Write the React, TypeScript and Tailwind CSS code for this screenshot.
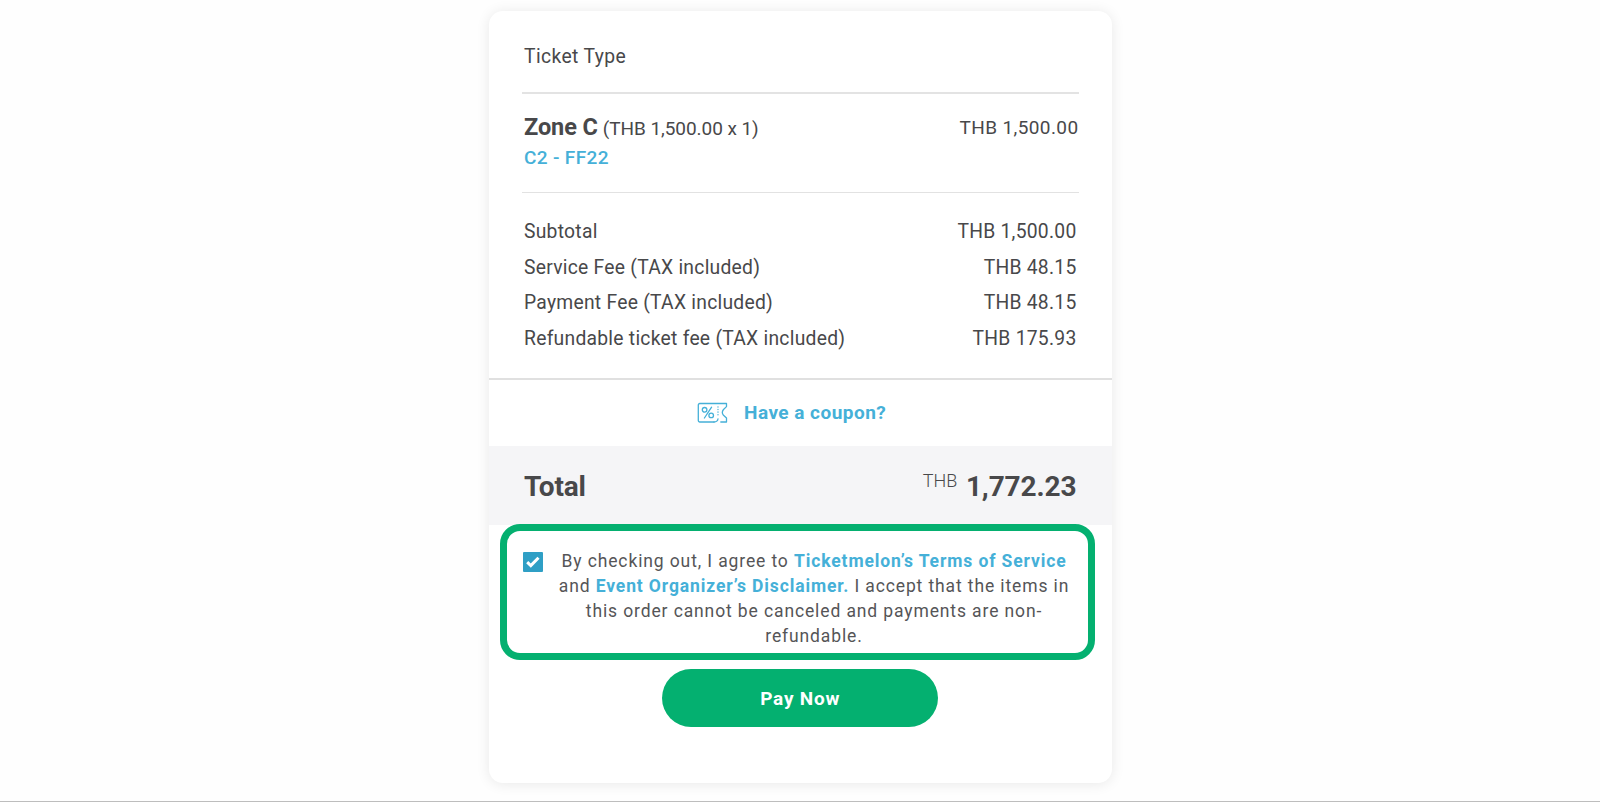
import {useState} from "react";

type Fee = {
  label: string;
  amount: string;
};

const fees: Fee[] = [
  {label: 'Subtotal', amount: 'THB 1,500.00'},
  {label: 'Service Fee (TAX included)', amount: 'THB 48.15'},
  {label: 'Payment Fee (TAX included)', amount: 'THB 48.15'},
  {label: 'Refundable ticket fee (TAX included)', amount: 'THB 175.93'},
];

function CouponIcon() {
  return (
      <svg width="31" height="22" viewBox="0 0 31 22" fill="none" stroke="#45b0d8" strokeWidth="1.3" strokeLinecap="round" strokeLinejoin="round">
        <path d="M17 20H2.800A1.500 1.500 0 0 1 1.300 18.500V3A1.500 1.500 0 0 1 2.800 1.500H29.500V4.600L26.500 7.500C25.200 9.200 25.200 11.800 26.500 13.300L29.500 16V20H23.800"/>
        <path d="M17 20C19.400 20 20.800 18.600 21 16.800"/>
        <path d="M21 4.800V15" strokeDasharray="0.2 2.400"/>
        <path d="M14.600 5.200L7.400 16"/>
        <circle cx="7.600" cy="7.800" r="2.300"/>
        <circle cx="14.200" cy="13.400" r="2.300"/>
      </svg>
  );
}

function App() {
  const [agreed, setAgreed] = useState(true);

  return (
      <div className="flex h-[802px] justify-center overflow-hidden border-b border-[#bdbdbd] bg-[#fefefe] pt-[11px] pl-[0.500px] font-['Roboto',sans-serif] text-[#48484a]">
        <div className="flex h-[772px] w-[622.500px] flex-col overflow-hidden rounded-[14px] bg-white shadow-[0_1px_14px_rgba(0,0,0,0.09)]">
          {/* Header */}
          <div className="mx-[33px] flex h-[83px] items-center border-b-2 border-[#e3e3e3] pt-[12px] pl-[2px] text-[19.300px] tracking-[0.38px]">
            Ticket Type
          </div>

          {/* Ticket */}
          <div className="mx-[33px] flex h-[99px] justify-between border-b border-[#e2e2e2] pt-[18px] pl-[2px] text-[19px]">
            <div>
              <div className="h-[30px] leading-[30px]">
                <span className="text-[23.500px] font-bold tracking-[-0.1px]">Zone C</span>
                <span className="ml-[5px] tracking-[-0.06px]">(THB 1,500.00 x 1)</span>
              </div>
              <div className="h-[30px] leading-[32px] font-medium tracking-[0.35px] text-[#45b0d8]">C2 - FF22</div>
            </div>
            <div className="leading-[32px] tracking-[0.4px]">THB 1,500.00</div>
          </div>

          {/* Fees */}
          <div className="h-[185px] pt-[21.500px] pr-[35px] pl-[35px]">
            {fees.map((fee) => (
                <div key={fee.label} className="flex h-[35.700px] items-center justify-between text-[19.300px] tracking-[0.26px]">
                  <span>{fee.label}</span>
                  <span>{fee.amount}</span>
                </div>
            ))}
          </div>

          {/* Coupon */}
          <button className="flex h-[68px] items-center border-t-2 border-[#e0e0e0] pl-[208px] text-[19px] font-bold tracking-[0.47px] text-[#45b0d8]">
            <CouponIcon/>
            <span className="ml-[16px]">Have a coupon?</span>
          </button>

          {/* Total */}
          <div className="flex h-[79px] shrink-0 justify-between bg-[#f5f5f7] pr-[35px] pl-[35px] leading-[82px]">
            <span className="text-[28px] font-bold tracking-[-0.2px]">Total</span>
            <div className="flex">
              <span className="mr-[8.500px] text-[18px] leading-[70px] font-light">THB</span>
              <span className="text-[28px] font-bold tracking-[-0.1px]">1,772.23</span>
            </div>
          </div>

          {/* Agreement */}
          <div className="relative z-10 -mt-[1px] ml-[11px] flex h-[136px] w-[595px] shrink-0 rounded-[20px] border-[7.5px] border-[#04b070] bg-white pt-[18px] pl-[16px]">
            <button
                role="checkbox"
                aria-checked={agreed}
                onClick={() => setAgreed(!agreed)}
                className="mt-[3px] flex h-[20px] w-[20px] items-center justify-center rounded-[1px] bg-[#2f9fc5]"
            >
              {agreed && (
                  <svg width="14" height="12" viewBox="0 0 14 12" fill="none" stroke="white" strokeWidth="3">
                    <path d="M1.200 6.200L4.800 9.600L12.500 1.800"/>
                  </svg>
              )}
            </button>
            <p className="ml-[15px] w-[512px] text-center text-[17.500px] leading-[24.900px] tracking-[0.88px] whitespace-nowrap text-[#555557]">
              By checking out, I agree to <b className="text-[#45b0d8]">Ticketmelon’s Terms of Service</b><br/>
              and <b className="text-[#45b0d8]">Event Organizer’s Disclaimer.</b> I accept that the items in<br/>
              this order cannot be canceled and payments are non-<br/>
              refundable.
            </p>
          </div>

          <button className="mx-auto mt-[9px] h-[58px] w-[276px] shrink-0 rounded-full bg-[#04b070] pt-[2px] text-[19px] font-bold tracking-[0.8px] text-white">
            Pay Now
          </button>
        </div>
      </div>
  );
}

export default App;
